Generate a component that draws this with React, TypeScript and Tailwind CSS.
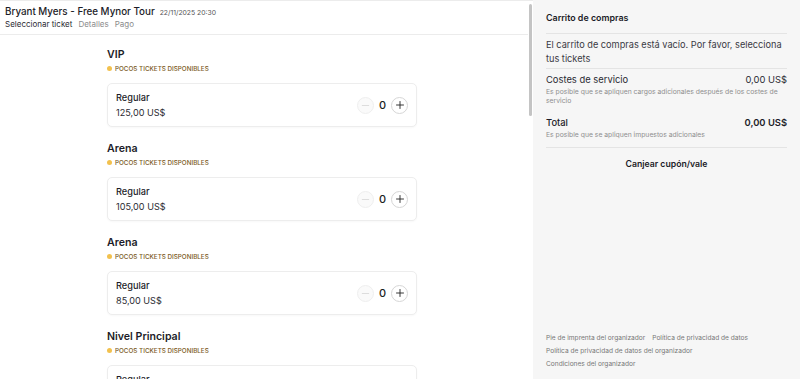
import { Minus, Plus } from 'lucide-react';

const sections = [
    { name: 'VIP', price: '125,00 US$' },
    { name: 'Arena', price: '105,00 US$' },
    { name: 'Arena', price: '85,00 US$' },
    { name: 'Nivel Principal', price: '65,00 US$' },
];

function Stepper() {
    return (
        <div className="flex items-center gap-[5px]">
            <button className="flex h-[17px] w-[17px] items-center justify-center rounded-full border border-[#efefef] bg-[#fafafa] text-[#d2d2d2]">
                <Minus size={11} strokeWidth={1.6} />
            </button>
            <span className="w-[7px] text-center text-[11px] font-medium text-[#1c1c1c]">0</span>
            <button className="flex h-[17px] w-[17px] items-center justify-center rounded-full border border-[#d6d6d6] bg-white text-[#222]">
                <Plus size={12} strokeWidth={1.8} />
            </button>
        </div>
    );
}

function TicketSection({ name, price }: { name: string; price: string }) {
    return (
        <div className="mb-[15px]">
            <h2 className="text-[10.6px] font-semibold leading-[14px] text-[#1c1c28]">{name}</h2>
            <div className="mt-[2px] flex h-[10px] items-center gap-[3px]">
                <span className="mb-[1px] h-[5px] w-[5px] rounded-full bg-[#f2c14e]" />
                <span className="text-[6.3px] font-medium uppercase leading-[10px] text-[#7b5b1e]">Pocos tickets disponibles</span>
            </div>
            <div className="mt-[9px] flex h-[44px] items-center justify-between rounded-[5px] border border-[#ededed] bg-white pl-[8px] pr-[8px] shadow-[0_1px_2px_rgba(0,0,0,0.03)]">
                <div>
                    <p className="text-[9.2px] font-medium leading-[13px] text-[#1c1c28]">Regular</p>
                    <p className="mt-[2px] text-[9.1px] leading-[13px] text-[#2b2b33]">{price}</p>
                </div>
                <Stepper />
            </div>
        </div>
    );
}

export default function App() {
    return (
        <div className="flex h-[379px] w-[800px] overflow-hidden bg-white font-['Inter',sans-serif]">
            {/* Ticket selection */}
            <div className="relative flex w-[533px] flex-col border-t border-[#ececec]">
                <div className="h-[34px] w-[528px] shrink-0 border-b border-[#ececec] pl-[5px] pt-[4px]">
                    <div className="flex items-baseline gap-[5px]">
                        <span className="text-[9.8px] font-medium leading-[13px] text-[#1c1c28]">Bryant Myers - Free Mynor Tour</span>
                        <span className="text-[6.8px] text-[#555]">22/11/2025 20:30</span>
                    </div>
                    <div className="flex gap-[6px] text-[8px] leading-[12px]">
                        <span className="text-[#2b2b33]">Seleccionar ticket</span>
                        <span className="text-[#8c8c8c]">Detalles</span>
                        <span className="text-[#8c8c8c]">Pago</span>
                    </div>
                </div>
                <div className="ml-[107px] w-[310px] shrink-0 pt-[13px]">
                    {sections.map((s, i) => (
                        <TicketSection key={i} name={s.name} price={s.price} />
                    ))}
                </div>
                {/* scrollbar thumb */}
                <div className="absolute right-[1px] top-[3px] h-[112px] w-[3px] rounded-full bg-[#c4c4c4]" />
            </div>

            {/* Cart */}
            <div className="flex flex-1 flex-col bg-[#f6f6f6] px-[13px] pb-[10px]">
                <div className="flex h-[34px] shrink-0 items-center border-b border-[#e4e4e4] pt-[3px]">
                    <h3 className="text-[8.9px] font-semibold text-[#1c1c28]">Carrito de compras</h3>
                </div>
                <div className="border-b border-[#e4e4e4] pb-[2px] pt-[4px] text-[9.2px] leading-[14px] text-[#3a3a44]">
                    El carrito de compras está vacío. Por favor, selecciona tus tickets
                </div>
                <div className="pt-[4px]">
                    <div className="flex justify-between text-[9.4px] leading-[14px] text-[#2b2b33]">
                        <span>Costes de servicio</span>
                        <span>0,00 US$</span>
                    </div>
                    <p className="text-[6.8px] leading-[9px] text-[#8f8f8f]">
                        Es posible que se apliquen cargos adicionales después de los costes de servicio
                    </p>
                </div>
                <div className="border-b border-[#e4e4e4] pb-[8px] pt-[11px]">
                    <div className="flex justify-between text-[9.4px] font-medium leading-[14px] text-[#1c1c28]">
                        <span>Total</span>
                        <span className="font-semibold">0,00 US$</span>
                    </div>
                    <p className="text-[6.8px] leading-[9px] text-[#8f8f8f]">Es posible que se apliquen impuestos adicionales</p>
                </div>
                <div className="pt-[10px] text-center text-[8.7px] font-semibold leading-[12px] text-[#1c1c28]">
                    Canjear cupón/vale
                </div>
                <div className="mt-auto flex flex-col gap-[4px] text-[6.6px] leading-[9px] text-[#777]">
                    <div className="flex gap-[7px]">
                        <span>Pie de imprenta del organizador</span>
                        <span>Política de privacidad de datos</span>
                    </div>
                    <span>Política de privacidad de datos del organizador</span>
                    <span>Condiciones del organizador</span>
                </div>
            </div>
        </div>
    );
}
